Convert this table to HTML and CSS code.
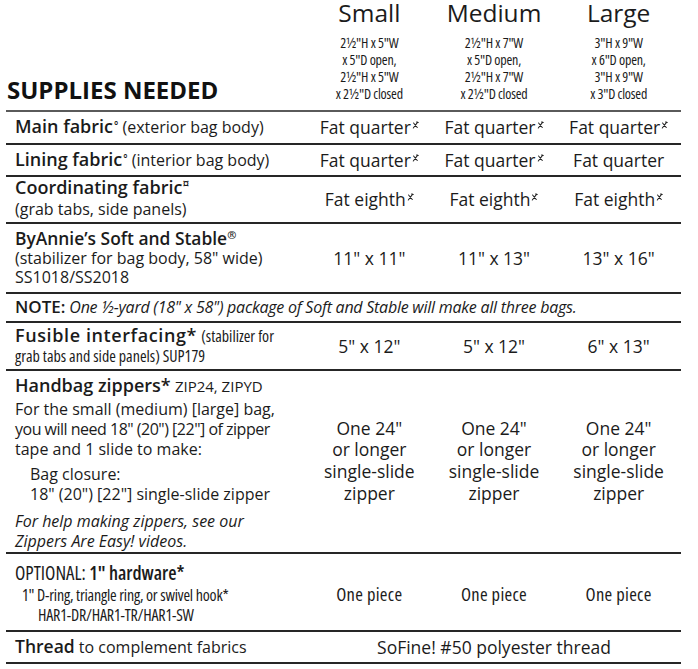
FILE: index.html
```html
<!DOCTYPE html>
<html lang="en">
<head>
<meta charset="utf-8">
<title>Supplies Needed</title>
<link rel="stylesheet" href="styles.css">
</head>
<body>
<div class="sheet">
  <div class="head">
    <h1 class="title">SUPPLIES NEEDED</h1>
    <div class="size">
      <div class="size-name">Small</div>
      <div class="dims">2½"H x 5"W<br>x 5"D open,<br>2½"H x 5"W<br>x 2½"D closed</div>
    </div>
    <div class="size">
      <div class="size-name">Medium</div>
      <div class="dims">2½"H x 7"W<br>x 5"D open,<br>2½"H x 7"W<br>x 2½"D closed</div>
    </div>
    <div class="size">
      <div class="size-name">Large</div>
      <div class="dims">3"H x 9"W<br>x 6"D open,<br>3"H x 9"W<br>x 3"D closed</div>
    </div>
  </div>

  <div class="row row-main">
    <div class="item"><b>Main fabric</b><span class="deg">°</span> (exterior bag body)</div>
    <div class="val">Fat quarter<svg class="mark" viewBox="0 0 8 9"><path d="M1.5 8 L6.5 1.2 M1.8 2.2 L6 7.4 M5.2 1 L7.2 1.6"/></svg></div>
    <div class="val">Fat quarter<svg class="mark" viewBox="0 0 8 9"><path d="M1.5 8 L6.5 1.2 M1.8 2.2 L6 7.4 M5.2 1 L7.2 1.6"/></svg></div>
    <div class="val">Fat quarter<svg class="mark" viewBox="0 0 8 9"><path d="M1.5 8 L6.5 1.2 M1.8 2.2 L6 7.4 M5.2 1 L7.2 1.6"/></svg></div>
  </div>

  <div class="row row-lining">
    <div class="item"><b>Lining fabric</b><span class="deg">°</span> (interior bag body)</div>
    <div class="val">Fat quarter<svg class="mark" viewBox="0 0 8 9"><path d="M1.5 8 L6.5 1.2 M1.8 2.2 L6 7.4 M5.2 1 L7.2 1.6"/></svg></div>
    <div class="val">Fat quarter<svg class="mark" viewBox="0 0 8 9"><path d="M1.5 8 L6.5 1.2 M1.8 2.2 L6 7.4 M5.2 1 L7.2 1.6"/></svg></div>
    <div class="val">Fat quarter</div>
  </div>

  <div class="row row-coord">
    <div class="item"><b>Coordinating fabric</b><span class="cur">¤</span><br>(grab tabs, side panels)</div>
    <div class="val">Fat eighth<svg class="mark" viewBox="0 0 8 9"><path d="M1.5 8 L6.5 1.2 M1.8 2.2 L6 7.4 M5.2 1 L7.2 1.6"/></svg></div>
    <div class="val">Fat eighth<svg class="mark" viewBox="0 0 8 9"><path d="M1.5 8 L6.5 1.2 M1.8 2.2 L6 7.4 M5.2 1 L7.2 1.6"/></svg></div>
    <div class="val">Fat eighth<svg class="mark" viewBox="0 0 8 9"><path d="M1.5 8 L6.5 1.2 M1.8 2.2 L6 7.4 M5.2 1 L7.2 1.6"/></svg></div>
  </div>

  <div class="row row-soft">
    <div class="item"><b class="soft-title">ByAnnie’s Soft and Stable<span class="reg">®</span></b><br>(stabilizer for bag body, 58" wide)<br>SS1018/SS2018</div>
    <div class="val">11" x 11"</div>
    <div class="val">11" x 13"</div>
    <div class="val">13" x 16"</div>
  </div>

  <div class="row row-note">
    <div class="note"><b>NOTE:</b> <i>One ½-yard (18" x 58") package of Soft and Stable will make all three bags.</i></div>
  </div>

  <div class="row row-fusible">
    <div class="item"><b class="fus-title">Fusible interfacing*</b> <span class="narrow">(stabilizer for<br>grab tabs and side panels) SUP179</span></div>
    <div class="val">5" x 12"</div>
    <div class="val">5" x 12"</div>
    <div class="val">6" x 13"</div>
  </div>

  <div class="row row-zip">
    <div class="item">
      <div class="zip-title"><b>Handbag zippers*</b> <span class="code">ZIP24, ZIPYD</span></div>
      <div class="zip-para">For the small (medium) [large] bag,<br><span class="tight">you will need 18" (20") [22"] of zipper</span><br>tape and 1 slide to make:</div>
      <div class="zip-indent">Bag closure:<br>18" (20") [22"] single-slide zipper</div>
      <div class="zip-help"><i>For help making zippers, see our<br>Zippers Are Easy! videos.</i></div>
    </div>
    <div class="val zip-val">One 24"<br>or longer<br>single-slide<br>zipper</div>
    <div class="val zip-val">One 24"<br>or longer<br>single-slide<br>zipper</div>
    <div class="val zip-val">One 24"<br>or longer<br>single-slide<br>zipper</div>
  </div>

  <div class="row row-opt">
    <div class="item narrow">
      <div class="opt-title">OPTIONAL: <b>1" hardware*</b></div>
      <div class="opt-sub">1" D-ring, triangle ring, or swivel hook*</div>
      <div class="opt-code">HAR1-DR/HAR1-TR/HAR1-SW</div>
    </div>
    <div class="val opt-val">One piece</div>
    <div class="val opt-val">One piece</div>
    <div class="val opt-val">One piece</div>
  </div>

  <div class="row row-thread">
    <div class="item"><b>Thread</b> to complement fabrics</div>
    <div class="val thread-val">SoFine! #50 polyester thread</div>
  </div>
</div>
</body>
</html>
```

FILE: styles.css
```css
html, body {
  margin: 0;
  padding: 0;
  background: #ffffff;
}

body {
  font-family: "Open Sans", "Noto Sans", "DejaVu Sans", sans-serif;
  color: #1b1b1b;
}

.sheet {
  width: 675px;
  margin-left: 6px;
}

.head,
.row {
  display: grid;
  grid-template-columns: 301px repeat(3, 1fr);
}

.head {
  align-items: end;
  padding-bottom: 8px;
  border-bottom: 2px solid #5a5a5a;
}

.title {
  margin: 0 0 -2px;
  padding: 0 0 0 1px;
  font-size: 24px;
  font-weight: 700;
  line-height: 28px;
  color: #111;
}

.size {
  text-align: center;
}

.size-name {
  font-size: 24.5px;
  line-height: 26px;
  font-weight: 400;
}

.dims {
  margin-top: 8px;
  font-size: 14px;
  line-height: 17px;
  font-stretch: 75%;
  letter-spacing: -0.2px;
}

.row {
  border-bottom: 2px solid #262626;
  align-items: center;
}

.item {
  padding: 3px 0 4px 9px;
  font-size: 16px;
  line-height: 20px;
}

.item b {
  font-weight: 600;
  font-size: 18px;
  line-height: 0;
}

.deg {
  font-weight: 600;
  font-size: 10px;
  line-height: 0;
  vertical-align: 4px;
  margin-left: 1px;
}

.cur {
  font-weight: 600;
  font-size: 12px;
  line-height: 0;
  vertical-align: 6px;
}

.reg {
  font-size: 11px;
  line-height: 0;
  vertical-align: 6px;
}

.val {
  text-align: center;
  font-size: 17.5px;
  line-height: 24px;
  padding: 3px 0 4px;
}

.mark {
  width: 7px;
  height: 8px;
  margin-left: 1px;
  vertical-align: 5px;
  fill: none;
  stroke: #222;
  stroke-width: 1.2;
  stroke-linecap: round;
}

.row-lining .val {
  padding-bottom: 3px;
}

.row-coord .item {
  padding: 1px 0 2px 9px;
  line-height: 21px;
}

.row-coord .val {
  padding: 2px 0 3px;
}

.row-soft .item {
  padding: 6px 0 5px 9px;
  line-height: 19px;
}

.item .soft-title {
  font-size: 17.4px;
}

.row-note {
  display: block;
}

.note {
  padding: 3px 0 4px 9px;
  font-size: 16px;
  line-height: 20px;
  letter-spacing: -0.25px;
}

.note b {
  font-weight: 600;
  font-size: 17px;
  line-height: 0;
  letter-spacing: 0;
}

.narrow {
  font-stretch: 75%;
}

.item .fus-title {
  font-size: 18px;
  letter-spacing: 0.6px;
}

.row-fusible .item {
  padding: 3px 0 3px 9px;
}

.zip-title {
  height: 24px;
  line-height: 24px;
}

.code {
  font-size: 15px;
  line-height: 0;
}

.zip-para {
  margin-top: 1px;
  height: 60px;
  white-space: nowrap;
}

.tight {
  letter-spacing: -0.5px;
}

.zip-indent {
  margin-top: 5px;
  height: 40px;
  padding-left: 15px;
}

.zip-help {
  margin-top: 7px;
  height: 40px;
}

.row-zip .item {
  padding-bottom: 1px;
}

.zip-val {
  font-size: 17.5px;
  line-height: 21.7px;
}

.row-opt .item {
  padding: 7px 0 5px 9px;
}

.opt-title {
  height: 24px;
  font-size: 19px;
  line-height: 24px;
}

.opt-title b {
  font-size: 19px;
}

.opt-sub {
  padding-left: 7px;
  font-size: 16px;
  line-height: 20px;
  letter-spacing: -0.2px;
}

.opt-code {
  padding-left: 23px;
  font-size: 16px;
  line-height: 20px;
  letter-spacing: -0.2px;
}

.opt-val {
  font-size: 18.5px;
  font-stretch: 75%;
  letter-spacing: 0.3px;
  padding-top: 8px;
}

.row-thread .item {
  padding: 4px 0 4px 9px;
  line-height: 22px;
}

.row-thread .item b {
  font-size: 17.5px;
}

.thread-val {
  grid-column: 2 / 5;
  font-size: 17.5px;
  line-height: 22px;
  padding: 4px 0 4px;
}
```
